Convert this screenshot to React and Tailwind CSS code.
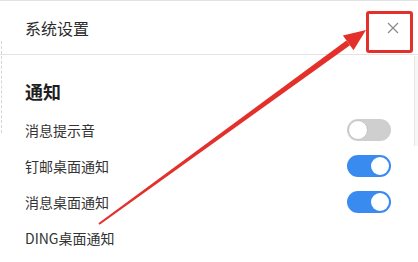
import React from 'react'

function Toggle({ on }) {
  return (
    <span
      className={
        on
          ? 'relative inline-flex h-[22px] w-[44px] items-center rounded-full bg-[#3a8bef]'
          : 'relative inline-flex h-[22px] w-[44px] items-center rounded-full bg-[#cfcfcf]'
      }
    >
      <span
        className={
          on
            ? 'absolute right-[2px] h-[18px] w-[18px] rounded-full bg-white'
            : 'absolute left-[1px] h-[20px] w-[20px] rounded-full border border-[#c4c4c4] bg-white'
        }
      />
    </span>
  )
}

const rows = [
  { label: '消息提示音', on: false, toggle: true },
  { label: '钉邮桌面通知', on: true, toggle: true },
  { label: '消息桌面通知', on: true, toggle: true },
  { label: 'DING桌面通知', on: false, toggle: false },
]

export default function App() {
  return (
    <div className="relative h-[262px] w-[418px] overflow-hidden border-t border-[#e2e2e2] bg-white font-['Noto_Sans_CJK_SC',sans-serif] text-[#333]">
      <div className="flex h-[54px] items-center justify-between border-b border-[#e4e4e4] pl-[25px] pr-[18px]">
        <span className="text-[16px] leading-[20px] text-[#2b2b2b]">系统设置</span>
        <svg width="12" height="12" viewBox="0 0 12 12" className="mr-[1px]">
          <path d="M1 1L11 11M11 1L1 11" stroke="#8a8a8a" strokeWidth="1.2" fill="none" />
        </svg>
      </div>

      <div className="pl-[25px] pt-[24px]">
        <h2 className="text-[18px] font-bold leading-[24px] text-[#1e1e1e]">通知</h2>
        <div className="mt-[9px]">
          {rows.map((r) => (
            <div key={r.label} className="flex h-[36px] items-center justify-between pr-[27px]">
              <span className="text-[14px] leading-[20px]">{r.label}</span>
              {r.toggle && <Toggle on={r.on} />}
            </div>
          ))}
        </div>
      </div>

      {/* faint scrollbar track on the right */}
      <div className="absolute right-0 top-[55px] h-[90px] w-[4px] border-l border-[#e6e6e6] bg-[#f7f7f7]" />
      {/* dotted edge on the left */}
      <div className="absolute left-[1px] top-[40px] h-[92px] w-0 border-l border-dashed border-[#d4d4de]" />

      {/* annotation: red box and arrow */}
      <div className="absolute left-[366px] top-[10px] h-[42px] w-[47px] rounded-[3px] border-[3px] border-[#e3302a]" />
      <svg className="pointer-events-none absolute left-0 top-0" width="418" height="262">
        <polygon
          points="98.4,222.2 99.6,223.8 350,44.3 346.4,39.5"
          fill="#e3302a"
        />
        <polygon points="366,29 353.5,49.2 342.9,34.6" fill="#e3302a" />
      </svg>
    </div>
  )
}
